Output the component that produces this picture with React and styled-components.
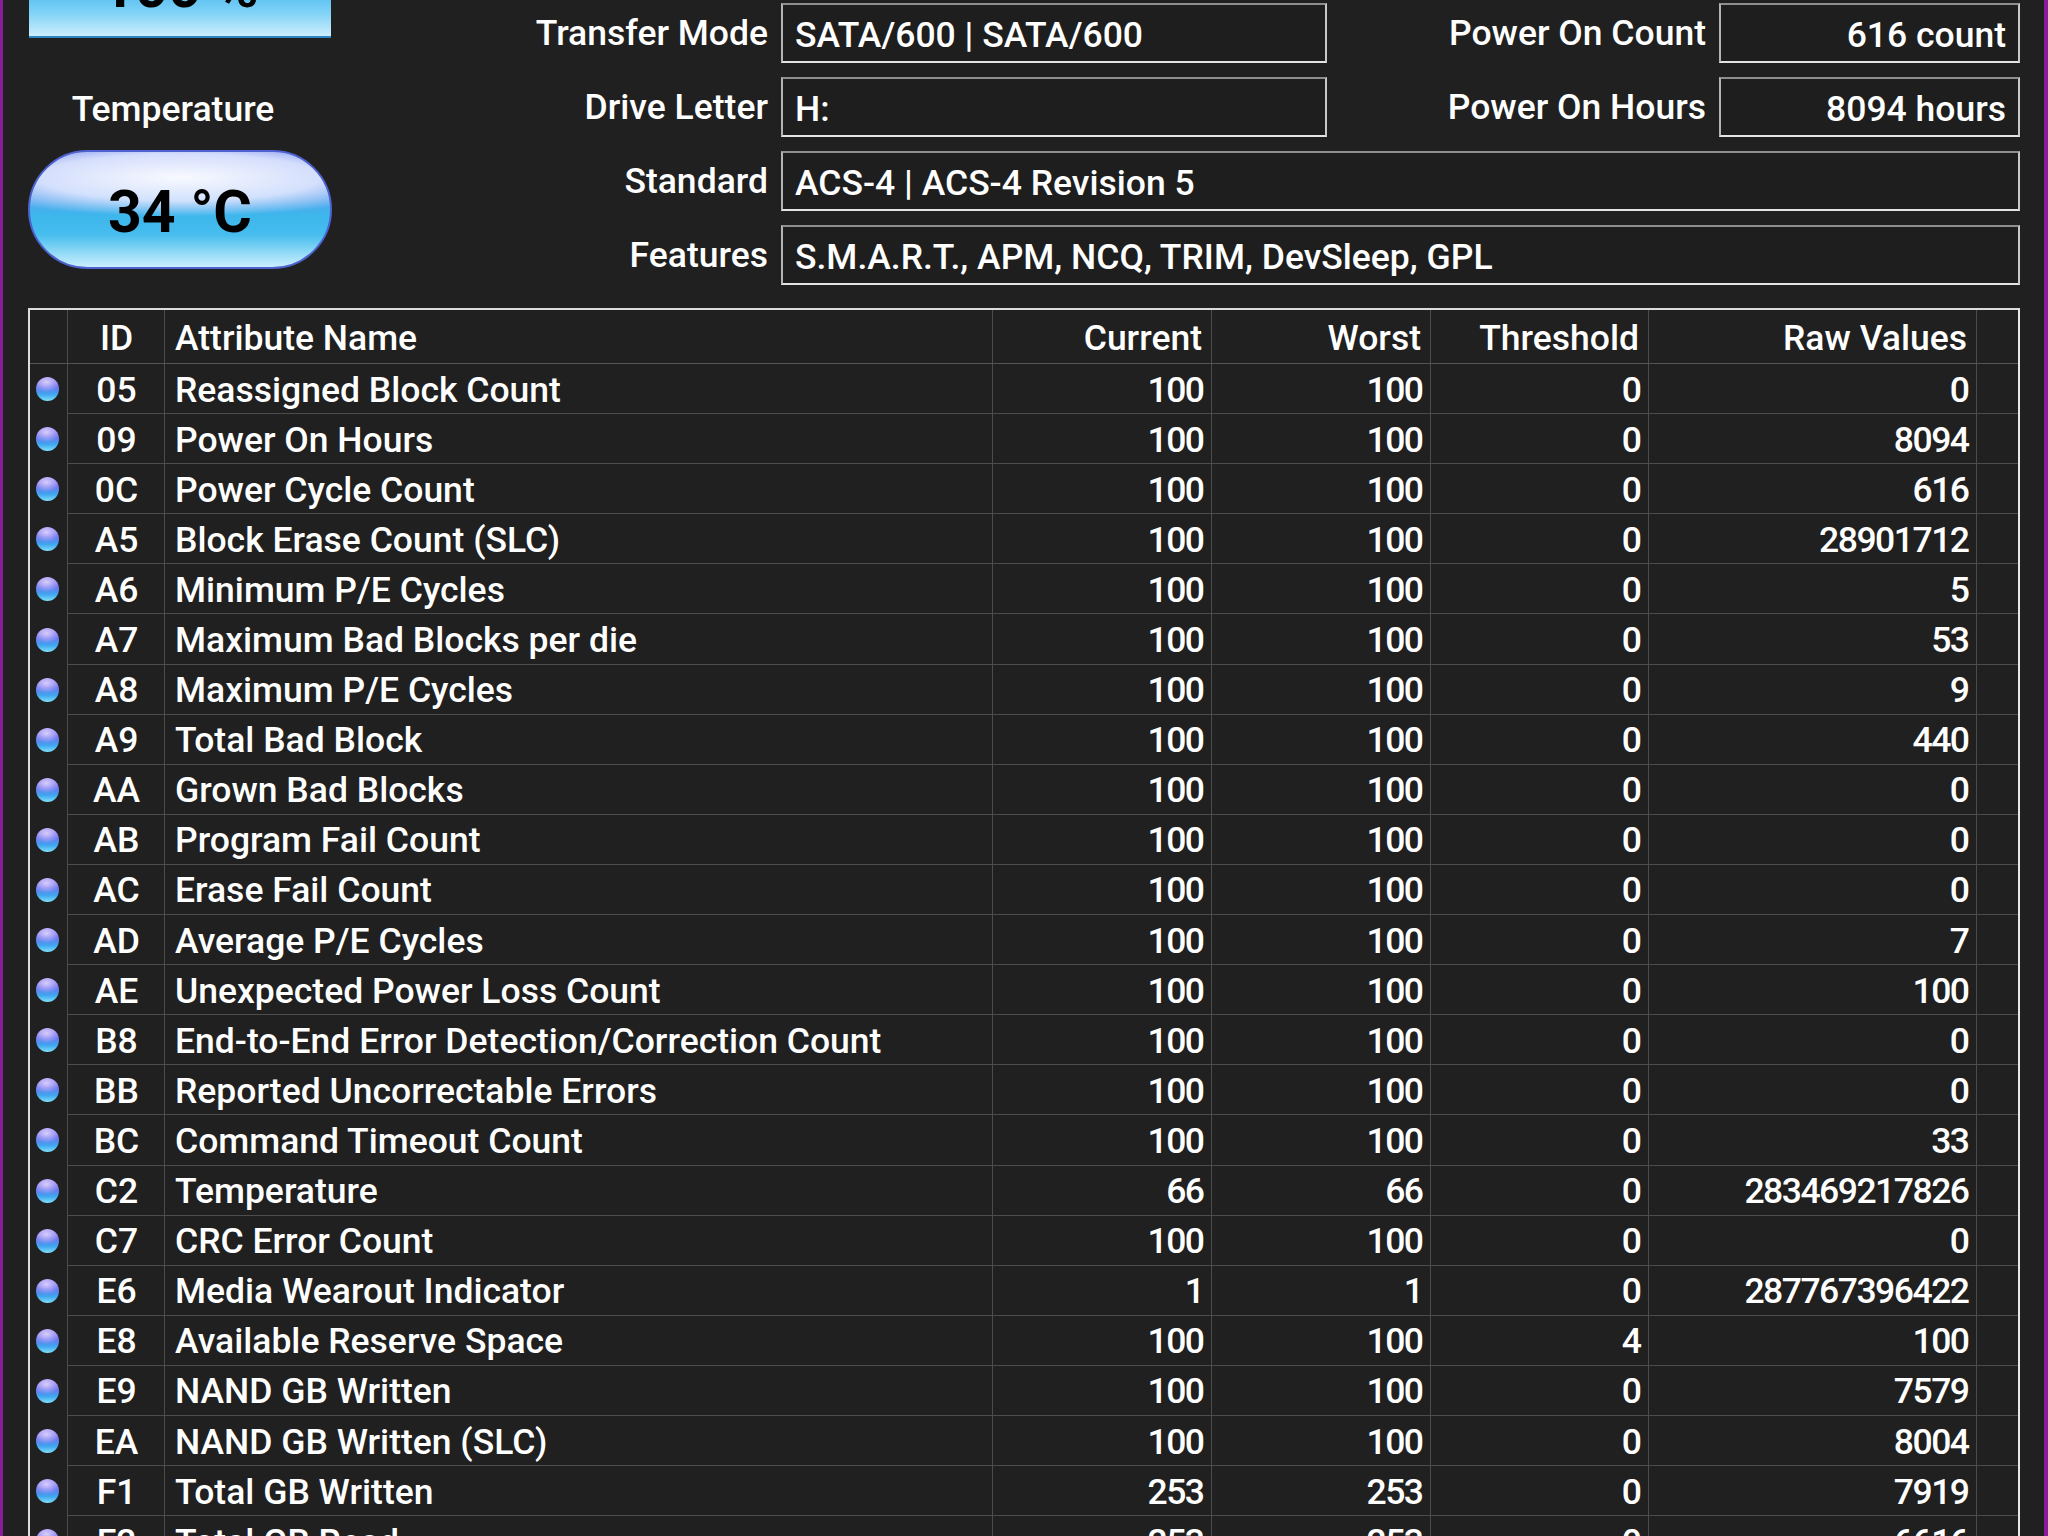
import styled, { createGlobalStyle } from 'styled-components'

const rows = [
  ['05', 'Reassigned Block Count', '100', '100', '0', '0'],
  ['09', 'Power On Hours', '100', '100', '0', '8094'],
  ['0C', 'Power Cycle Count', '100', '100', '0', '616'],
  ['A5', 'Block Erase Count (SLC)', '100', '100', '0', '28901712'],
  ['A6', 'Minimum P/E Cycles', '100', '100', '0', '5'],
  ['A7', 'Maximum Bad Blocks per die', '100', '100', '0', '53'],
  ['A8', 'Maximum P/E Cycles', '100', '100', '0', '9'],
  ['A9', 'Total Bad Block', '100', '100', '0', '440'],
  ['AA', 'Grown Bad Blocks', '100', '100', '0', '0'],
  ['AB', 'Program Fail Count', '100', '100', '0', '0'],
  ['AC', 'Erase Fail Count', '100', '100', '0', '0'],
  ['AD', 'Average P/E Cycles', '100', '100', '0', '7'],
  ['AE', 'Unexpected Power Loss Count', '100', '100', '0', '100'],
  ['B8', 'End-to-End Error Detection/Correction Count', '100', '100', '0', '0'],
  ['BB', 'Reported Uncorrectable Errors', '100', '100', '0', '0'],
  ['BC', 'Command Timeout Count', '100', '100', '0', '33'],
  ['C2', 'Temperature', '66', '66', '0', '283469217826'],
  ['C7', 'CRC Error Count', '100', '100', '0', '0'],
  ['E6', 'Media Wearout Indicator', '1', '1', '0', '287767396422'],
  ['E8', 'Available Reserve Space', '100', '100', '4', '100'],
  ['E9', 'NAND GB Written', '100', '100', '0', '7579'],
  ['EA', 'NAND GB Written (SLC)', '100', '100', '0', '8004'],
  ['F1', 'Total GB Written', '253', '253', '0', '7919'],
  ['F2', 'Total GB Read', '253', '253', '0', '6616'],
]

const App = () => {
  return (
    <>
      <GlobalStyle />
      <Window>
        <Top>
          <LeftPanel>
            <HealthBox>100 %</HealthBox>
            <PanelLabel>Temperature</PanelLabel>
            <TempPill>34 °C</TempPill>
          </LeftPanel>

          <InfoGrid>
            <Label>Transfer Mode</Label>
            <Field>SATA/600 | SATA/600</Field>
            <Label>Power On Count</Label>
            <Field $right>616 count</Field>

            <Label>Drive Letter</Label>
            <Field>H:</Field>
            <Label>Power On Hours</Label>
            <Field $right>8094 hours</Field>

            <Label>Standard</Label>
            <Field $wide>ACS-4 | ACS-4 Revision 5</Field>

            <Label>Features</Label>
            <Field $wide>S.M.A.R.T., APM, NCQ, TRIM, DevSleep, GPL</Field>
          </InfoGrid>
        </Top>

        <Table>
          <HeadRow>
            <Cell />
            <Cell $align="center">ID</Cell>
            <Cell $align="left">Attribute Name</Cell>
            <Cell>Current</Cell>
            <Cell>Worst</Cell>
            <Cell>Threshold</Cell>
            <Cell>Raw Values</Cell>
            <Filler />
          </HeadRow>
          {rows.map((r) => (
            <Row key={r[0]}>
              <DotCell>
                <Dot />
              </DotCell>
              <Cell $align="center">{r[0]}</Cell>
              <Cell $align="left">{r[1]}</Cell>
              <Cell $num>{r[2]}</Cell>
              <Cell $num>{r[3]}</Cell>
              <Cell $num>{r[4]}</Cell>
              <Cell $num>{r[5]}</Cell>
              <Filler />
            </Row>
          ))}
        </Table>
      </Window>
    </>
  )
}

// styled components -------
const GlobalStyle = createGlobalStyle`
  html, body {
    margin: 0;
    padding: 0;
    background: #8a1c9c;
    overflow: hidden;
  }
  body {
    font-family: Roboto, "Liberation Sans", sans-serif;
    font-weight: 500;
    color: #ffffff;
  }
`

const Window = styled.div`
  margin: 0 4px 0 3px;
  height: 1536px;
  background: #202020;
  overflow: hidden;
  padding: 0 24px 0 25px;
  box-sizing: border-box;
`

const Top = styled.div`
  display: flex;
  height: 308px;
`

const LeftPanel = styled.div`
  width: 304px;
  display: flex;
  flex-direction: column;
  align-items: center;
`

const HealthBox = styled.div`
  width: 302px;
  height: 120px;
  margin-top: -82px;
  box-sizing: border-box;
  display: flex;
  align-items: flex-end;
  justify-content: center;
  padding-bottom: 20px;
  background: linear-gradient(to bottom, #2a9de6 0%, #3fb4ee 55%, #7fd2f6 80%, #cdeefc 100%);
  border-bottom: 2px solid #2c86c0;
  color: #000;
  font-weight: 700;
  font-size: 58px;
  line-height: 1;
`

const PanelLabel = styled.div`
  margin-top: 53px;
  padding-right: 14px;
  font-size: 35.5px;
  line-height: 36px;
`

const TempPill = styled.div`
  margin-top: 23px;
  width: 304px;
  height: 119px;
  box-sizing: border-box;
  border-radius: 60px;
  border: 2px solid #4d62cf;
  display: flex;
  align-items: center;
  justify-content: center;
  padding-top: 4px;
  color: #000;
  font-weight: 700;
  font-size: 59px;
  overflow: hidden;
  background:
    radial-gradient(ellipse 78% 34% at 50% 22%, rgba(255, 255, 255, 0.95) 0%, rgba(230, 236, 255, 0.85) 60%, rgba(200, 210, 255, 0) 100%),
    linear-gradient(to bottom, #6f86ee 0%, #6a98f0 30%, #3db6ec 55%, #47bdee 72%, #a6e2f8 92%, #c9efff 100%);
`

const InfoGrid = styled.div`
  flex: 1;
  display: grid;
  grid-template-columns: 436px 546px 366px 301px;
  grid-auto-rows: 60px;
  column-gap: 13px;
  row-gap: 14px;
  padding-top: 3px;
`

const Label = styled.div`
  display: flex;
  align-items: center;
  justify-content: flex-end;
  font-size: 35.5px;
  white-space: nowrap;
`

const Field = styled.div`
  grid-column: ${(p) => (p.$wide ? '2 / 5' : 'auto')};
  box-sizing: border-box;
  border: 2px solid #c8c8c8;
  border-top-color: #8e8e8e;
  border-left-color: #b4b4b4;
  border-bottom-color: #e4e4e4;
  background: #1e1e1e;
  display: flex;
  align-items: center;
  justify-content: ${(p) => (p.$right ? 'flex-end' : 'flex-start')};
  padding: 3px 12px 0 12px;
  font-size: 35.5px;
  white-space: nowrap;
`

const Table = styled.div`
  border: 2px solid #dcdcdc;
  border-bottom: none;
  border-right-color: #e8e8e8;
`

const Row = styled.div`
  display: grid;
  grid-template-columns: 38px 97px 828px 219px 219px 218px 328px 1fr;
  height: 50.1px;
`

const HeadRow = styled(Row)`
  height: 53px;
  border-bottom: 1px solid #555;
`

const Cell = styled.div`
  box-sizing: border-box;
  border-right: 1px solid #4c4c4c;
  border-bottom: 1px solid #4c4c4c;
  display: flex;
  align-items: center;
  justify-content: ${(p) =>
    p.$align === 'center' ? 'center' : p.$align === 'left' ? 'flex-start' : 'flex-end'};
  padding: 2px ${(p) => (p.$num ? '7.5px' : '9px')} 0 10px;
  font-size: 35.5px;
  letter-spacing: ${(p) => (p.$num ? '-1.5px' : 'normal')};
  white-space: nowrap;
  overflow: hidden;

  ${HeadRow} & {
    border-bottom: none;
  }
`

const DotCell = styled(Cell)`
  justify-content: center;
  padding: 0 3px 0 0;
  border-bottom: none;
`

const Filler = styled.div`
  border-bottom: 1px solid #4c4c4c;

  ${HeadRow} & {
    border-bottom: none;
  }
`

const Dot = styled.span`
  width: 23px;
  height: 24px;
  border-radius: 50%;
  background:
    radial-gradient(ellipse 60% 40% at 45% 22%, rgba(235, 225, 255, 0.8) 0%, rgba(200, 190, 255, 0) 100%),
    linear-gradient(to bottom, #9a88f4 0%, #6f74ee 40%, #3fa6ef 72%, #7fe0fa 100%);
`
//--------------------
export default App
